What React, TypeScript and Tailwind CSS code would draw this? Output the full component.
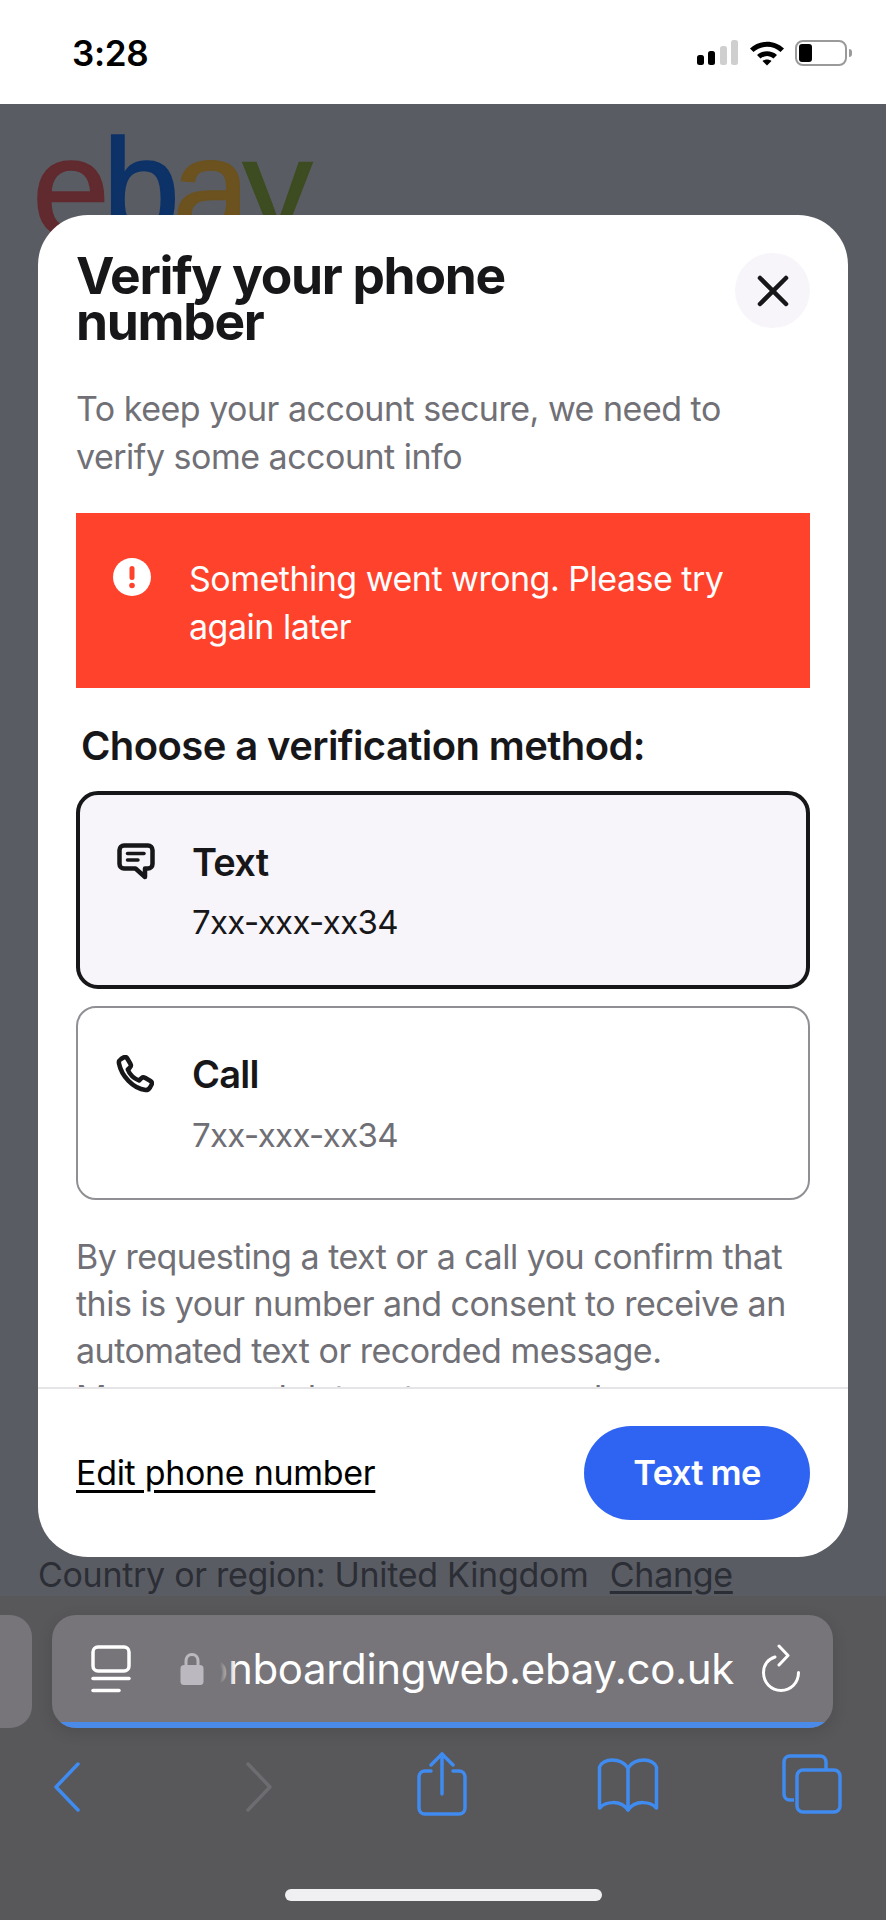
import { X } from "lucide-react";

const inter = "font-['Inter','Liberation_Sans',sans-serif]";

function StatusIcons() {
  return (
    <div className="flex items-end gap-[10px] pr-[34px]">
      <svg width="42" height="26" viewBox="0 0 42 26">
        <rect x="0" y="15" width="7" height="10" rx="2.5" fill="#000" />
        <rect x="11" y="11" width="7" height="14" rx="2.5" fill="#000" />
        <rect x="23" y="6" width="7" height="19" rx="2.5" fill="#cfcfcf" />
        <rect x="34" y="0" width="7" height="25" rx="2.5" fill="#cfcfcf" />
      </svg>
      <svg width="36" height="27" viewBox="0 0 36 27">
        <path d="M1 9.500C10.500 0.500 25.500 0.500 35 9.500L31.500 13C24 6 12 6 4.500 13Z" fill="#000" />
        <path d="M8 16C13.500 11 22.500 11 28 16L24.500 19.500C20.500 16 15.500 16 11.500 19.500Z" fill="#000" />
        <path d="M18 26.500L13.500 22C16 20 20 20 22.500 22Z" fill="#000" />
      </svg>
      <div className="flex items-center">
        <div className="h-[26px] w-[52px] rounded-[8px] border-2 border-[#9a9a9a] p-[2px]">
          <div className="h-full w-[13px] rounded-[3px] bg-black" />
        </div>
        <div className="ml-[2px] h-[8px] w-[3px] rounded-r-full bg-[#9a9a9a]" />
      </div>
    </div>
  );
}

function MessageIcon() {
  return (
    <svg width="38" height="37" viewBox="0 0 38 37" fill="none" stroke="#17171a" strokeWidth="4.500" strokeLinejoin="round" strokeLinecap="round">
      <path d="M7 2.500H31C33.500 2.500 35.500 4.500 35.500 7V21C35.500 23.500 33.500 25.500 31 25.500H28V34L18.500 25.500H7C4.500 25.500 2.500 23.500 2.500 21V7C2.500 4.500 4.500 2.500 7 2.500Z" />
      <path d="M10.500 10.500H27" strokeWidth="3.500" />
      <path d="M10.500 17H21" strokeWidth="3.500" />
    </svg>
  );
}

function PhoneIcon() {
  return (
    <svg width="38" height="38" viewBox="0 0 38 38" fill="none" stroke="#17171a" strokeWidth="4.500" strokeLinejoin="round">
      <path d="M3 8.500C2.500 6.500 3.500 5 5 4L7.500 2.500C9 1.700 10.500 2.200 11.300 3.500L14.500 9C15.200 10.300 15 11.500 14 12.500L11.800 14.500C13.500 19 18 23.500 23 25.500L25.500 23.200C26.500 22.300 27.800 22.200 29 22.800L34.500 26C35.800 26.800 36.200 28.300 35.500 29.700L34 32.500C33 34.200 31.500 35.200 29.500 35C17 33.500 5.500 21 3 8.500Z" />
    </svg>
  );
}

function OptionCard({ title, sub, selected, icon }: { title: string; sub: string; selected?: boolean; icon: React.ReactNode }) {
  return (
    <div
      className={
        selected
          ? "flex h-[198px] gap-[37px] rounded-[22px] border-[4px] border-[#17171a] bg-[#f7f5f9] pt-[45px] pl-[37px]"
          : "flex h-[194px] gap-[38px] rounded-[20px] border-2 border-[#8f8f94] bg-white pt-[44px] pl-[38px]"
      }
    >
      <div className="mt-[3px] w-[38px]">{icon}</div>
      <div>
        <div className="text-[38px] leading-[44px] font-semibold tracking-[-0.02em] text-[#17171a]">{title}</div>
        <div className={selected ? "mt-[16px] text-[33px] leading-[44px] tracking-[-0.02em] text-[#17171a]" : "mt-[17px] text-[33px] leading-[44px] tracking-[-0.02em] text-[#6f6f75]"}>
          {sub}
        </div>
      </div>
    </div>
  );
}

function Modal() {
  return (
    <div className="absolute top-[215px] left-[38px] flex h-[1342px] w-[810px] flex-col overflow-hidden rounded-[50px] bg-white">
      <div className="h-[1172px] overflow-hidden px-[38px] pt-[33px]">
        <div className="flex items-start justify-between">
          <h1 className="w-[480px] pt-[4px] text-[51.500px] leading-[46px] font-bold tracking-[-0.025em] text-[#17171a]">Verify your phone number</h1>
          <button className="mt-[5px] flex h-[75px] w-[75px] items-center justify-center rounded-full bg-[#f7f5f9] text-[#17171a]">
            <X size={52} strokeWidth={2.100} />
          </button>
        </div>
        <p className="mt-[41px] max-w-[700px] text-[34px] leading-[48px] tracking-[-0.5px] text-[#707076]">
          To keep your account secure, we need to verify some account info
        </p>
        <div className="mt-[32px] flex h-[175px] gap-[38px] bg-[#ff422c] pt-[42px] pl-[37px] text-white">
          <svg width="38" height="38" viewBox="0 0 38 38" className="mt-[3px] shrink-0">
            <circle cx="19" cy="19" r="19" fill="#fff" />
            <rect x="16.500" y="8" width="5" height="14" rx="2.500" fill="#ff422c" />
            <circle cx="19" cy="27.500" r="2.800" fill="#ff422c" />
          </svg>
          <p className="w-[560px] text-[34px] leading-[48px] tracking-[-0.5px]">Something went wrong. Please try again later</p>
        </div>
        <h2 className="mt-[36px] ml-[5px] text-[40px] leading-[44px] font-semibold tracking-[-0.015em] text-[#17171a]">Choose a verification method:</h2>
        <div className="mt-[23px] flex flex-col gap-[17px]">
          <OptionCard selected title="Text" sub="7xx-xxx-xx34" icon={<MessageIcon />} />
          <OptionCard title="Call" sub="7xx-xxx-xx34" icon={<PhoneIcon />} />
        </div>
        <p className="mt-[33px] text-[34px] leading-[47px] tracking-[-0.5px] text-[#707076]">
          By requesting a text or a call you confirm that this is your number and consent to receive an automated text or recorded message.
          <br />
          Message and data rates may apply.
        </p>
      </div>
      <div className="flex flex-1 items-start justify-between border-t-2 border-[#e5e5e8] px-[38px] pt-[37px]">
        <a className="mt-[23px] text-[34px] leading-[48px] tracking-[-0.300px] text-black underline underline-offset-[5px]">Edit phone number</a>
        <button className="h-[94px] w-[226px] rounded-full bg-[#2f64f2] text-[34.500px] font-semibold tracking-[-0.02em] text-white">Text me</button>
      </div>
    </div>
  );
}

function Toolbar() {
  return (
    <div className="flex h-[324px] flex-col bg-[#58575a]">
      <div className="mt-[19px] flex gap-[20px]">
        <div className="h-[113px] w-[32px] rounded-r-[22px] bg-[#77757a]" />
        <div className="relative flex h-[113px] w-[781px] items-center overflow-hidden rounded-[24px] bg-[#77757a] pb-[6px] pl-[39px] shadow-[0_4px_16px_rgba(0,0,0,0.12)]">
          <svg width="40" height="48" viewBox="0 0 40 48" fill="none" stroke="#fff" strokeWidth="3.500" strokeLinecap="round">
            <rect x="2" y="2" width="36" height="24" rx="5" />
            <path d="M2 33.500H38" />
            <path d="M2 45.500H28" />
          </svg>
          <svg width="24" height="34" viewBox="0 0 24 34" className="ml-[49px]">
            <path d="M6 15V9C6 5 8.500 2.500 12 2.500C15.500 2.500 18 5 18 9V15" fill="none" stroke="#bbb9bf" strokeWidth="3" />
            <rect x="0.500" y="13" width="23" height="20" rx="3.500" fill="#bbb9bf" />
          </svg>
          <div className="relative ml-[16px] flex w-[514px] justify-end overflow-hidden text-[42px] leading-[52px] tracking-[-0.008em] whitespace-nowrap text-white">
            onboardingweb.ebay.co.uk
            <div className="absolute top-0 bottom-0 left-0 w-[16px] bg-gradient-to-r from-[#77757a] to-transparent" />
          </div>
          <svg width="40" height="50" viewBox="0 0 40 50" fill="none" stroke="#fff" strokeWidth="3" strokeLinecap="round" strokeLinejoin="round" className="ml-[27px]">
            <path d="M14 13C7 15 2.500 21 2.500 28.500C2.500 38.500 10 46.500 20 46.500C30 46.500 37.500 38.500 37.500 28.500" />
            <path d="M18 2L27 11.500L18 21" />
          </svg>
          <div className="absolute right-0 bottom-0 left-0 h-[6px] bg-[#4a8ae8]" />
        </div>
      </div>
      <div className="mt-[24px] flex items-start pl-[53px]">
        <svg width="28" height="50" viewBox="0 0 28 50" fill="none" stroke="#3f8bf0" strokeWidth="3.500" strokeLinecap="round" strokeLinejoin="round" className="mt-[10px]">
          <path d="M25 2L3 25L25 48" />
        </svg>
        <svg width="28" height="50" viewBox="0 0 28 50" fill="none" stroke="#6d6c70" strokeWidth="3.500" strokeLinecap="round" strokeLinejoin="round" className="mt-[10px] ml-[164px]">
          <path d="M3 2L25 25L3 48" />
        </svg>
        <svg width="50" height="64" viewBox="0 0 50 64" fill="none" stroke="#3f8bf0" strokeWidth="3.500" strokeLinecap="round" strokeLinejoin="round" className="ml-[144px]">
          <path d="M14 19H8C4.500 19 2 21.500 2 25V56C2 59.500 4.500 62 8 62H42C45.500 62 48 59.500 48 56V25C48 21.500 45.500 19 42 19H36" />
          <path d="M25 42V2" />
          <path d="M14 13L25 2L36 13" />
        </svg>
        <svg width="62" height="54" viewBox="0 0 62 54" fill="none" stroke="#3f8bf0" strokeWidth="3.500" strokeLinecap="round" strokeLinejoin="round" className="mt-[6px] ml-[130px]">
          <path d="M31 10C27 4 21 2 15 2C9 2 4 5 2.500 9V50C8 44 23 41 31 52C39 41 54 44 59.500 50V9C58 5 53 2 47 2C41 2 35 4 31 10Z" />
          <path d="M31 10V52" />
        </svg>
        <svg width="60" height="60" viewBox="0 0 60 60" fill="none" stroke="#3f8bf0" strokeWidth="3.500" strokeLinejoin="round" className="mt-[2px] ml-[123px]">
          <path d="M12 46H8C4.500 46 2 43.500 2 40V8C2 4.500 4.500 2 8 2H38C41.500 2 44 4.500 44 8V16" />
          <rect x="15" y="16" width="43" height="42" rx="6" />
        </svg>
      </div>
      <div className="mt-auto mb-[19px] ml-[285px] h-[12px] w-[317px] rounded-full bg-[#f0eff2]" />
    </div>
  );
}

export default function App() {
  return (
    <div className={`relative flex h-[1920px] w-[886px] flex-col overflow-hidden ${inter}`}>
      <div className="flex h-[104px] items-center justify-between bg-white">
        <span className="pt-[2px] pl-[72px] text-[35px] font-semibold tracking-[-0.01em] text-black">3:28</span>
        <StatusIcons />
      </div>
      <div className="flex flex-1 flex-col justify-between overflow-hidden bg-[#5a5c64] px-[38px]">
        <div className="mt-[16px] -ml-[6px] font-['Liberation_Sans',sans-serif] text-[140px] leading-[136px] tracking-[-0.055em] [-webkit-text-stroke:1.5px_currentColor]">
          <span className="text-[#612a2e]">e</span>
          <span className="text-[#0c3268]">b</span>
          <span className="text-[#6b521f]">a</span>
          <span className="text-[#3d4c21]">y</span>
        </div>
        <div className="mb-[1px] text-[34px] leading-[40px] tracking-[-0.300px] text-[#2c2e35]">
          Country or region: United Kingdom <a className="ml-[12px] underline underline-offset-[4px]">Change</a>
        </div>
      </div>
      <Toolbar />
      <Modal />
    </div>
  );
}
